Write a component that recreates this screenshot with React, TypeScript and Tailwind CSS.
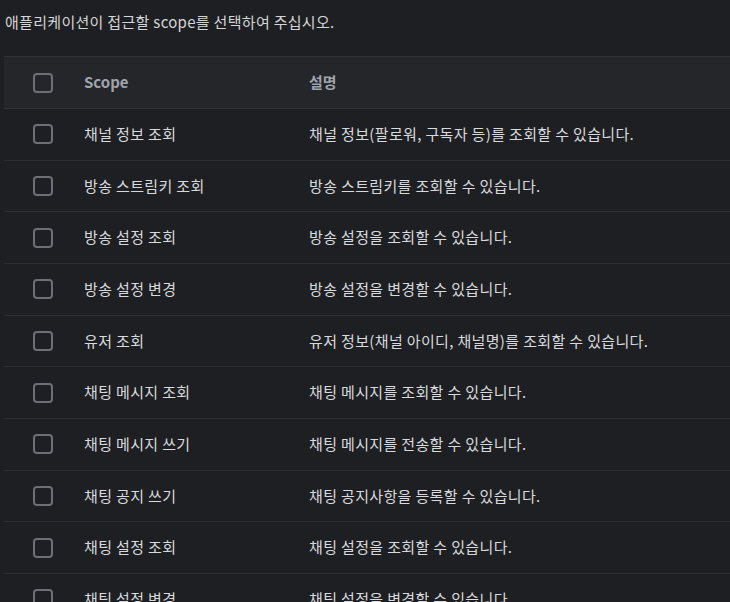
const scopes = [
  { name: "채널 정보 조회", desc: "채널 정보(팔로워, 구독자 등)를 조회할 수 있습니다." },
  { name: "방송 스트림키 조회", desc: "방송 스트림키를 조회할 수 있습니다." },
  { name: "방송 설정 조회", desc: "방송 설정을 조회할 수 있습니다." },
  { name: "방송 설정 변경", desc: "방송 설정을 변경할 수 있습니다." },
  { name: "유저 조회", desc: "유저 정보(채널 아이디, 채널명)를 조회할 수 있습니다." },
  { name: "채팅 메시지 조회", desc: "채팅 메시지를 조회할 수 있습니다." },
  { name: "채팅 메시지 쓰기", desc: "채팅 메시지를 전송할 수 있습니다." },
  { name: "채팅 공지 쓰기", desc: "채팅 공지사항을 등록할 수 있습니다." },
  { name: "채팅 설정 조회", desc: "채팅 설정을 조회할 수 있습니다." },
  { name: "채팅 설정 변경", desc: "채팅 설정을 변경할 수 있습니다." },
];

const Box = () => (
  <span className="block w-5 h-5 rounded-[4px] border-2 border-[#6c6f76]" />
);

const App = () => {
  return (
    <div
      className="min-h-screen bg-[#1e1f22] text-[#d8dadd] overflow-hidden"
      style={{ fontFamily: '"Noto Sans CJK KR", "Noto Sans", sans-serif' }}
    >
      <p className="pl-[5px] pt-[10px] text-[15px] leading-[24px] text-[#d4d5d7] tracking-[0.3px]">
        애플리케이션이 접근할 scope를 선택하여 주십시오.
      </p>
      <table className="ml-[4px] mt-[22px] w-[760px] text-left text-[15px] border-collapse">
        <thead className="bg-[#252629] border-t border-[#303236]">
          <tr className="h-[52px] border-b border-[#303236]">
            <th className="w-[80px] pl-[29px]">
              <Box />
            </th>
            <th className="w-[225px] font-bold text-[#9fa4ad]">Scope</th>
            <th className="font-bold text-[#9fa4ad]">설명</th>
          </tr>
        </thead>
        <tbody>
          {scopes.map((item, index) => (
            <tr className="h-[51.67px] border-b border-[#2c2e32]" key={index}>
              <td className="pl-[29px]">
                <Box />
              </td>
              <td className="tracking-[0.35px]">{item.name}</td>
              <td className="tracking-[0.35px]">{item.desc}</td>
            </tr>
          ))}
        </tbody>
      </table>
    </div>
  );
};

export default App;
